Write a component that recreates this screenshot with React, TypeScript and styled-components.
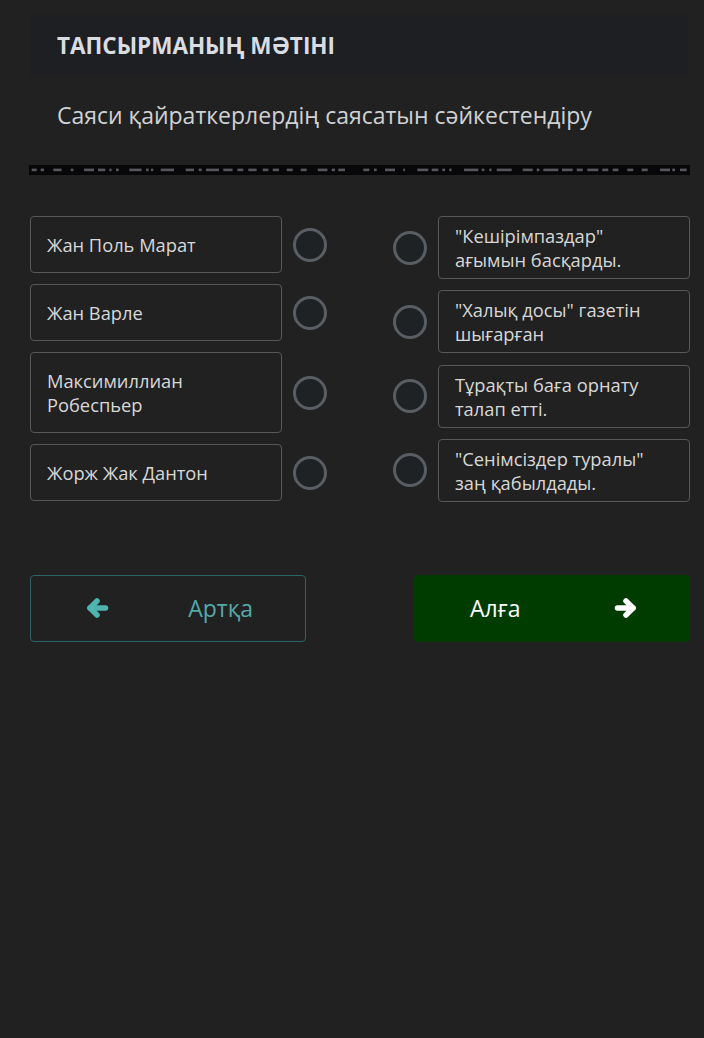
import React from "react";
import styled, { createGlobalStyle } from "styled-components";

const GlobalStyle = createGlobalStyle`
  html, body { margin: 0; padding: 0; background: #212121; }
  body { font-family: "Open Sans", "Noto Sans", "DejaVu Sans", sans-serif; }
  * { box-sizing: border-box; }
`;

const Page = styled.div`
  width: 704px;
  min-height: 1038px;
  padding: 15px 14px 0 30px;
  display: flex;
  flex-direction: column;
  background: #212121;
`;

const Header = styled.div`
  height: 60px;
  margin-right: 2px;
  background: #1d1f22;
  display: flex;
  align-items: center;
  padding-left: 27px;
`;

const Title = styled.h1`
  margin: 0;
  font-size: 22.5px;
  font-weight: 700;
  color: #d9dde2;
`;

const Question = styled.p`
  margin: 25px 0 0 27px;
  font-size: 23px;
  line-height: 30px;
  color: #cfd2d5;
`;

const Stripe = styled.svg`
  display: block;
  margin: 35px 0 0 -1px;
  width: 661px;
  height: 10px;
`;

const Match = styled.div`
  margin-top: 41px;
  display: flex;
  justify-content: space-between;
  align-items: flex-start;
`;

const Column = styled.div<{ $gap: number }>`
  display: flex;
  flex-direction: column;
  gap: ${(p) => p.$gap}px;
`;

const Row = styled.div`
  display: flex;
  align-items: center;
  gap: 11px;
`;

const Card = styled.div<{ $pad: number }>`
  width: 252px;
  border: 1px solid #56595c;
  border-radius: 4px;
  padding: ${(p) => p.$pad}px 20px ${(p) => p.$pad - 1}px 16px;
  font-size: 18.3px;
  line-height: 24px;
  color: #d8d8d8;
`;

const Radio = styled.span`
  width: 34px;
  height: 34px;
  border-radius: 50%;
  border: 3px solid #585e63;
  background: #1f2225;
  flex: none;
`;

const Buttons = styled.div`
  margin-top: 73px;
  display: flex;
  justify-content: space-between;
`;

const NavButton = styled.button<{ $primary?: boolean }>`
  width: 276px;
  height: 67px;
  border-radius: 4px;
  display: flex;
  align-items: center;
  justify-content: space-between;
  padding: 0 52px 0 55px;
  font-family: "Open Sans", "Noto Sans", sans-serif;
  font-size: 23px;
  cursor: pointer;
  border: 1px solid ${(p) => (p.$primary ? "#003c00" : "#2b6567")};
  background: ${(p) => (p.$primary ? "#003c00" : "transparent")};
  color: ${(p) => (p.$primary ? "#ffffff" : "#52aaa7")};
  svg { color: ${(p) => (p.$primary ? "#ffffff" : "#4fb3ae")}; }
`;

const Arrow = ({ dir }: { dir: "left" | "right" }) => (
  <svg
    width="23"
    height="20"
    viewBox="0 0 23 20"
    style={dir === "left" ? { transform: "scaleX(-1)" } : undefined}
  >
    <g fill="none" stroke="currentColor" strokeWidth="5.5" strokeLinecap="round" strokeLinejoin="round">
      <path d="M3.5 10 H19" />
      <path d="M12 3 L19 10 L12 17" />
    </g>
  </svg>
);

const left = [
  "Жан Поль Марат",
  "Жан Варле",
  "Максимиллиан Робеспьер",
  "Жорж Жак Дантон",
];

const right = [
  "\"Кешірімпаздар\" ағымын басқарды.",
  "\"Халық досы\" газетін шығарған",
  "Тұрақты баға орнату талап етті.",
  "\"Сенімсіздер туралы\" заң қабылдады.",
];

const dashes: [number, number][] = [
  [31.7, 5], [40.7, 3.3], [53.3, 8.3], [70.7, 2.7], [84, 10], [98, 7.3], [109.3, 2.3],
  [116, 2.7], [129.3, 12.3], [146, 2.7], [151, 2.3], [160.7, 13.3], [185.7, 8.3],
  [198.7, 3], [206, 13], [223.3, 9.3], [237.3, 6], [248.3, 8.3], [262.7, 5.7],
  [272.7, 6.3], [286.7, 6], [300.7, 6], [317.7, 9.7], [331.7, 3.3], [338.3, 6.7],
  [363.3, 6], [374, 2.7], [385, 10], [403.3, 1.7], [417.3, 11], [431.7, 6.7],
  [442.3, 2.7], [449.3, 2.3], [464, 14.3], [481.7, 2.7], [489.3, 2.3], [496.7, 15],
  [522.7, 10], [536.7, 2.7], [543.3, 15], [562, 10.7], [576.7, 6], [587.3, 11],
  [602.3, 6], [612.7, 5.7], [627.3, 6], [641.7, 6], [660, 10], [672.3, 2.7], [680, 6.7],
];

export default function App() {
  return (
    <>
      <GlobalStyle />
      <Page>
        <Header>
          <Title>ТАПСЫРМАНЫҢ МӘТІНІ</Title>
        </Header>
        <Question>Саяси қайраткерлердің саясатын сәйкестендіру</Question>
        <Stripe viewBox="29 0 661 10">
          <rect x="29" y="0" width="661" height="10" fill="#07070a" />
          {dashes.map(([x, w], i) => (
            <rect key={i} x={x} y="3.6" width={w} height="2.6" fill="#55575c" />
          ))}
        </Stripe>
        <Match>
          <Column $gap={11}>
            {left.map((t) => (
              <Row key={t}>
                <Card $pad={16}>{t}</Card>
                <Radio />
              </Row>
            ))}
          </Column>
          <Column $gap={11.3}>
            {right.map((t) => (
              <Row key={t}>
                <Radio />
                <Card $pad={7}>{t}</Card>
              </Row>
            ))}
          </Column>
        </Match>
        <Buttons>
          <NavButton>
            <Arrow dir="left" />
            <span>Артқа</span>
          </NavButton>
          <NavButton $primary>
            <span>Алға</span>
            <Arrow dir="right" />
          </NavButton>
        </Buttons>
      </Page>
    </>
  );
}
